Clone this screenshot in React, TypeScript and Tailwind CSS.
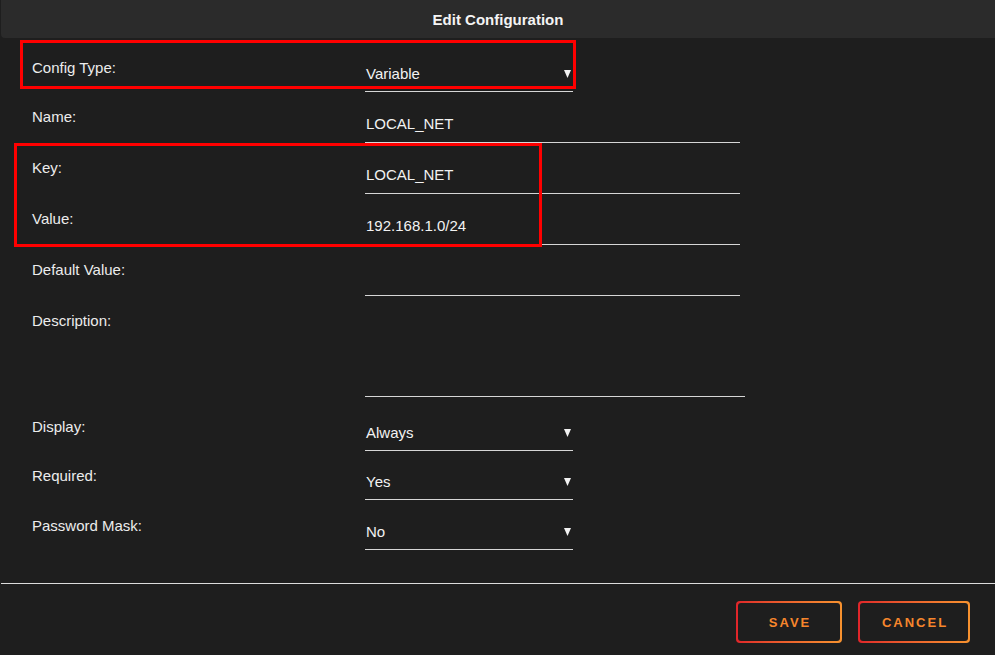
import React from "react";

const Arrow = () => (
  <svg width="7" height="8" viewBox="0 0 7 8" className="shrink-0">
    <polygon points="0,0 7,0 3.5,8" fill="#f2f2f2" />
  </svg>
);

function TextRow({ label, value, h = "h-[35px]", w = "w-[375px]" }: { label: string; value?: string; h?: string; w?: string }) {
  return (
    <div className="flex items-start">
      <div className="w-[365px] shrink-0 pl-[32px] text-[15px] leading-[18px] text-[#ececec]">{label}</div>
      <div className={`${w} ${h} shrink-0 border-b border-[#d6d6d6] flex items-start`}>
        {value ? <span className="mt-[7px] pl-[1px] text-[15px] leading-[18px] text-[#f2f2f2]">{value}</span> : null}
      </div>
    </div>
  );
}

function SelectRow({ label, value }: { label: string; value: string }) {
  return (
    <div className="flex items-start">
      <div className="w-[365px] shrink-0 pl-[32px] text-[15px] leading-[18px] text-[#ececec]">{label}</div>
      <div className="w-[208px] h-[33px] shrink-0 border-b border-[#d6d6d6] flex items-start justify-between pr-[2px]">
        <span className="mt-[6px] pl-[1px] text-[15px] leading-[18px] text-[#f2f2f2]">{value}</span>
        <span className="mt-[11px] flex"><Arrow /></span>
      </div>
    </div>
  );
}

export default function App() {
  return (
    <div
      className="relative w-[995px] h-[655px] bg-[#1e1e1e] flex flex-col overflow-hidden"
      style={{ fontFamily: '"Liberation Sans", Arial, sans-serif' }}
    >
      <div className="h-[38px] shrink-0 ml-[1px] bg-[#2b2b2b] rounded-bl-[4px] flex items-center justify-center">
        <span className="text-[15px] font-bold text-[#f4f4f4] mt-[2px]">Edit Configuration</span>
      </div>

      <div className="flex flex-col pt-[21px]">
        <SelectRow label="Config Type:" value="Variable" />
        <div className="flex flex-col gap-[16px] mt-[16px]">
          <TextRow label="Name:" value="LOCAL_NET" />
          <TextRow label="Key:" value="LOCAL_NET" />
          <TextRow label="Value:" value="192.168.1.0/24" />
          <TextRow label="Default Value:" />
          <TextRow label="Description:" h="h-[85px]" w="w-[380px]" />
        </div>
        <div className="flex flex-col mt-[21px]">
          <SelectRow label="Display:" value="Always" />
          <div className="mt-[16px]"><SelectRow label="Required:" value="Yes" /></div>
          <div className="mt-[17px]"><SelectRow label="Password Mask:" value="No" /></div>
        </div>
      </div>

      <div className="mt-[33px] ml-[1px] border-t border-[#dcdcdc]" />

      <div className="flex justify-end gap-[16px] pr-[25px] pt-[17px]">
        <div className="w-[106px] h-[42px] rounded-[4px] p-[2px] bg-gradient-to-r from-[#e0242a] to-[#f7922f]">
          <div className="w-full h-full rounded-[3px] bg-[#1e1e1e] flex items-center justify-center">
            <span className="text-[13px] font-bold tracking-[2px] text-[#f7862c] pl-[2px] mt-[1px]">SAVE</span>
          </div>
        </div>
        <div className="w-[112px] h-[42px] rounded-[4px] p-[2px] bg-gradient-to-r from-[#e0242a] to-[#f7922f]">
          <div className="w-full h-full rounded-[3px] bg-[#1e1e1e] flex items-center justify-center">
            <span className="text-[13px] font-bold tracking-[2px] text-[#f7862c] pl-[2px] mt-[1px]">CANCEL</span>
          </div>
        </div>
      </div>

      <div className="absolute left-[20px] top-[40px] w-[556px] h-[49px] border-[3px] border-[#ff0000]" />
      <div className="absolute left-[14px] top-[143px] w-[528px] h-[104px] border-[3px] border-[#ff0000]" />
    </div>
  );
}
